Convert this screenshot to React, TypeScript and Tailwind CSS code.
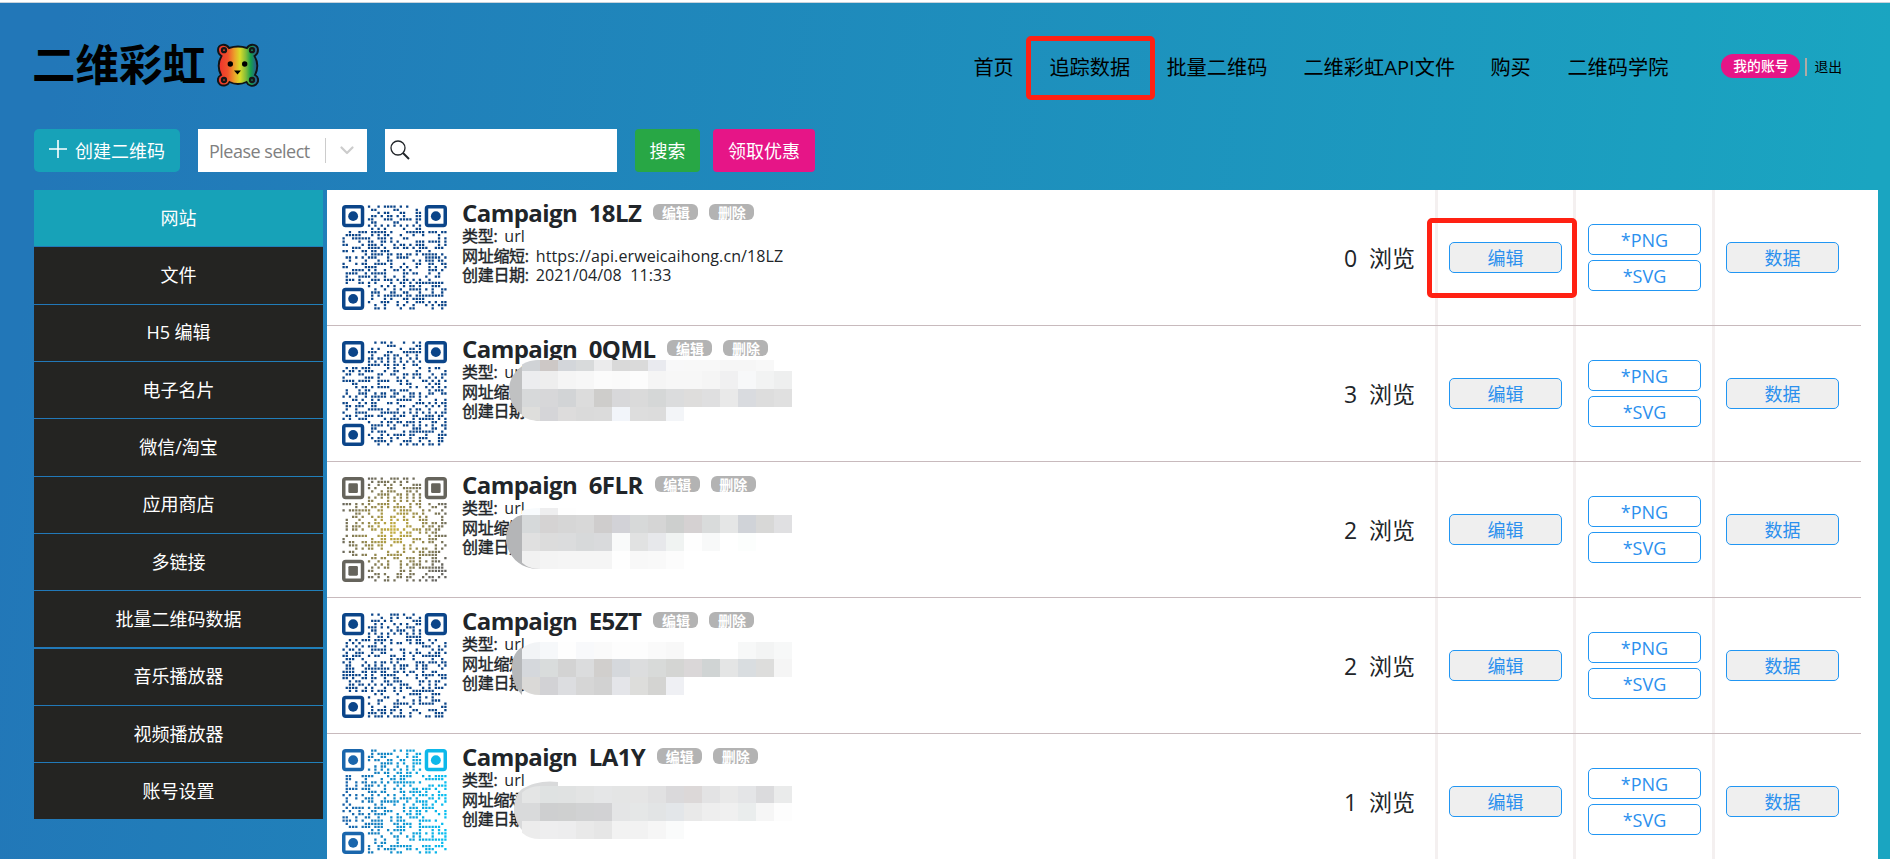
import React from 'react';

type QrStyle = 'navy' | 'gold' | 'sky';

interface Mask {
  blob: string;
  blobFill: string;
  bands: { y: number; h: number; cells: string[] }[];
}

interface Campaign {
  code: string;
  views: number;
  qr: QrStyle;
  seed: number;
  mask?: Mask;
}

const NAV = [
  { label: '首页', w: 'w-[40px] mr-[36px]' },
  { label: '追踪数据', w: 'w-[81px] mr-[36px]', marked: true },
  { label: '批量二维码', w: 'w-[101px] mr-[36px]' },
  { label: '二维彩虹API文件', w: 'w-[151px] mr-[36px]' },
  { label: '购买', w: 'w-[41px] mr-[36px]' },
  { label: '二维码学院', w: 'w-[101px] mr-[53px]' },
];

const SIDEBAR = ['网站', '文件', 'H5 编辑', '电子名片', '微信/淘宝', '应用商店', '多链接', '批量二维码数据', '音乐播放器', '视频播放器', '账号设置'];

const CAMPAIGNS: Campaign[] = [
  { code: '18LZ', views: 0, qr: 'navy', seed: 11 },
  {
    code: '0QML', views: 3, qr: 'navy', seed: 29,
    mask: {
      blob: 'M40 34 C22 36 9 48 9 64 C9 82 24 94 40 95 Z', blobFill: '#c0c1c2',
      bands: [
        { y: 34, h: 11, cells: ['#d0d3d6', '#cdc8c6', '#d3d6da', '#d8dadb', '#ebebec', '#d9d9d9', '#dadada', '#e9eaef', '#f8f8f9', '#f8f8f8', '#f8f8f8', '#f6f6f6', '#f6f6f6', '#f8f8f8'] },
        { y: 45, h: 18, cells: ['#ecedef', '#eeeeee', '#f5f5f5', '#f7f7f7', '#fbfbfb', '#fafafa', '#fcfcfc', '#f5f5f5', '#f7f7f7', '#f7f7f7', '#f5f5f5', '#f0f0f1', '#f7f8f9', '#f2f3f3', '#eeefef'] },
        { y: 63, h: 18, cells: ['#d7d9da', '#d7d7d9', '#d2d4d6', '#dcdcdc', '#cecdcb', '#d8d8da', '#dadada', '#d5d7d7', '#dbdcdd', '#dedddc', '#dfdfe0', '#e9e9e9', '#d9dbdf', '#dddddd', '#e0e0e0'] },
        { y: 81, h: 14, cells: ['#dededc', '#d5d5d8', '#dddcdc', '#dadada', '#dbdbdb', '#f2f5fa', '#dddddd', '#dcdcdc', '#f3f5f8'] },
      ],
    },
  },
  {
    code: '6FLR', views: 2, qr: 'gold', seed: 47,
    mask: {
      blob: 'M22 53 C11 55 6 66 6 78 C7 93 19 106 36 107 L40 107 L40 90 L22 89 Z', blobFill: '#b4b5b7',
      bands: [
        { y: 46, h: 7, cells: ['#f8fbfd', '#eeeeef', '#fefefe'] },
        { y: 53, h: 18, cells: ['#d6d9da', '#d5d3d3', '#d6d6d6', '#d8d8d8', '#cfcdcd', '#d2d2d7', '#d7d9d9', '#d5d5d5', '#cdcfce', '#d5d1d2', '#d9dbdb', '#e5e6e6', '#d0d3d8', '#d8d8d7', '#e0e0e2'] },
        { y: 71, h: 18, cells: ['#e0e0e0', '#dcdcdc', '#dbdcdd', '#d7d9da', '#d9dadc', '#f9fafa', '#e1e2e2', '#e7e8eb', '#f0f3f2', '#fefefe', '#f8f9f9', '#ffffff', '#fcfefd'] },
        { y: 89, h: 18, cells: ['#f1f1f1', '#f4f4f4', '#f5f5f5', '#f5f5f5', '#f5f5f5', '#fefefe', '#f8f8f8', '#f9f9f9', '#fcfcfc'] },
      ],
    },
  },
  {
    code: 'E5ZT', views: 2, qr: 'navy', seed: 83,
    mask: {
      blob: 'M22 49 C14 54 11 63 12 74 C13 85 17 92 22 97 Z', blobFill: '#b6b8ba',
      bands: [
        { y: 44, h: 17, cells: ['#f2f4f6', '#f6f8fa', '#fefefe', '#f8f9fb', '#fafafa', '#fdfdfd', '#fdfdfd', '#fafafa', '#f8f8f8', '#ffffff', '#ffffff', '#ffffff', '#f7f8f8', '#f3f4f4', '#f7f8f8'] },
        { y: 61, h: 18, cells: ['#d5d8dc', '#d9dcdc', '#d3d3d3', '#dbdcdd', '#d1cfcd', '#d5d8dc', '#dcddde', '#d8dad9', '#d4d5d3', '#dad7d8', '#d0d4d4', '#e4e5e5', '#d9dde0', '#dddddc', '#f5f5f5'] },
        { y: 79, h: 18, cells: ['#dad9d7', '#d2d2d5', '#dcdde0', '#d6d6d6', '#d2d2d2', '#e4e5e9', '#dddddb', '#d4d4d2', '#eff0f4'] },
      ],
    },
  },
  {
    code: 'LA1Y', views: 1, qr: 'sky', seed: 101,
    mask: {
      blob: 'M22 55 C16 60 14 68 14 77 C15 84 18 92 22 96 L40 60 L58 52 V48 C45 46 32 49 22 55 Z', blobFill: '#d9dadb',
      bands: [
        { y: 52, h: 17, cells: ['#e4e5e5', '#dfe2e2', '#e0e2e2', '#e3e4e4', '#e5e6e7', '#e4e5e5', '#e5e5e5', '#e1e1e2', '#dad9db', '#dcd8d8', '#e3e3e4', '#e9e9e9', '#e4e5e7', '#dbdbdd', '#eaebeb'] },
        { y: 69, h: 18, cells: ['#d9dadb', '#cecfd0', '#cfd0d0', '#d1d2d3', '#d2d2d4', '#e4e5e6', '#e5e7e7', '#e2e4e5', '#e3e6e9', '#e9e9e9', '#eeeeee', '#f0f0f0', '#eaeded', '#f6f6f6', '#fdfdfd'] },
        { y: 87, h: 18, cells: ['#ececec', '#eeeeef', '#ededee', '#e9e9e9', '#e6e6e6', '#f2f2f2', '#f2f2f2', '#f6f6f6', '#fafbfb'] },
      ],
    },
  },
];

const N = 33;

function modules(seed: number): string {
  let s = seed * 7919;
  const next = () => {
    s = (s * 1103515245 + 12345) % 2147483648;
    return s / 2147483648;
  };
  let d = '';
  for (let y = 0; y < N; y++) {
    for (let x = 0; x < N; x++) {
      let on = next() < 0.46;
      if ((x < 8 && y < 8) || (x >= N - 8 && y < 8) || (x < 8 && y >= N - 8)) continue;
      const r = Math.max(Math.abs(x - 26), Math.abs(y - 26));
      if (r <= 2) on = r !== 1;
      if (y === 6 || x === 6) on = (x + y) % 2 === 0;
      if (on) d += `M${x + 0.14} ${y + 0.14}h.72v.72h-.72z`;
    }
  }
  return d;
}

function QrCode({ style, seed }: { style: QrStyle; seed: number }) {
  const id = `qr-${seed}`;
  const fill = style === 'navy' ? '#0b4589' : `url(#${id})`;
  const eyes = [[0, 0], [N - 7, 0], [0, N - 7]];
  const eyeFill = (i: number) =>
    style === 'navy' ? '#0b4589' : style === 'gold' ? '#66645c' : i === 1 ? '#0db8ea' : '#1a66ac';
  return (
    <svg viewBox="0 0 33 33" className="mt-[15px] ml-[15px] h-[105px] w-[105px] shrink-0">
      {style === 'gold' && (
        <radialGradient id={id} gradientUnits="userSpaceOnUse" cx="16.5" cy="16.5" r="19">
          <stop offset="0" stopColor="#c7b03c" />
          <stop offset="1" stopColor="#65645f" />
        </radialGradient>
      )}
      {style === 'sky' && (
        <linearGradient id={id} gradientUnits="userSpaceOnUse" x1="0" y1="0" x2="33" y2="0">
          <stop offset="0" stopColor="#1a5fa6" />
          <stop offset="1" stopColor="#08c0f2" />
        </linearGradient>
      )}
      <path d={modules(seed)} fill={fill} />
      {eyes.map(([x, y], i) => (
        <g key={i} transform={`translate(${x} ${y})`}>
          <rect x=".55" y=".55" width="5.9" height="5.9" rx=".6" fill="none" stroke={eyeFill(i)} strokeWidth="1.100" />
          {style === 'gold' ? (
            <rect x="2" y="2" width="3" height="3" rx=".4" fill={eyeFill(i)} />
          ) : (
            <circle cx="3.5" cy="3.5" r="1.55" fill={eyeFill(i)} />
          )}
        </g>
      ))}
    </svg>
  );
}

function MaskOverlay({ mask }: { mask: Mask }) {
  return (
    <svg viewBox="0 0 292 136" className="absolute top-0 left-[173px] h-[136px] w-[292px]" shapeRendering="crispEdges">
      <path d={mask.blob} fill={mask.blobFill} shapeRendering="auto" />
      {mask.bands.map((b, j) =>
        b.cells.map((c, i) => {
          const edge = i === 0 && (j === 0 || j === mask.bands.length - 1);
          return edge ? (
            <path
              key={`${j}-${i}`}
              shapeRendering="auto"
              fill={c}
              d={
                j === 0
                  ? `M22 ${b.y + b.h}v${-b.h * 0.6}q7 ${-b.h * 0.4} 18 ${-b.h * 0.4}v${b.h}z`
                  : `M22 ${b.y}v${b.h * 0.65}q7 ${b.h * 0.35} 18 ${b.h * 0.35}v${-b.h}z`
              }
            />
          ) : (
            <rect key={`${j}-${i}`} x={22 + i * 18} y={b.y} width="18" height={b.h} fill={c} />
          );
        }),
      )}
    </svg>
  );
}

function Bear() {
  return (
    <svg viewBox="0 0 42 44" className="ml-[11px] h-[44px] w-[42px]">
      <linearGradient id="rainbow" gradientUnits="userSpaceOnUse" x1="1" y1="0" x2="41" y2="0">
        <stop offset="0" stopColor="#ee2e2c" />
        <stop offset=".25" stopColor="#f0542b" />
        <stop offset=".42" stopColor="#eba52a" />
        <stop offset=".55" stopColor="#d9dc28" />
        <stop offset=".7" stopColor="#7fbb3c" />
        <stop offset=".82" stopColor="#15a04c" />
        <stop offset=".95" stopColor="#26608f" />
      </linearGradient>
      <path
        d="M12 5C9 0 1 1 1 7c0 4 2 5 3.500 6C1 19 1 26 4 32c-4 2-4 7-1 9.500 3 2 8 1 9.500-2.500 5 2.300 12 2.300 17 0C31 43 36 44 39 41.500c3-2.500 3-7.500-1-9.500 3-6 3-13-.5-19C39 12 41 11 41 7c0-6-8-7-11-2C24 3 18 3 12 5Z"
        fill="url(#rainbow)" stroke="#101417" strokeWidth="1.900"
      />
      <g fill="none" stroke="#161616" strokeWidth="2.300">
        <circle cx="7" cy="7.200" r="2" /><circle cx="35" cy="7.200" r="2" />
        <circle cx="7" cy="37" r="2" /><circle cx="35" cy="37" r="2" />
      </g>
      <circle cx="13.300" cy="21" r="2.700" /><circle cx="27.700" cy="21" r="2.700" />
      <path d="M17 27.500h7L20.500 31.500z" />
    </svg>
  );
}

function Tag({ children }: { children: React.ReactNode }) {
  return (
    <span className="flex h-4 w-[45px] items-center justify-center rounded-[6px] bg-[#b3b3b3] pt-[1px] text-[14px] leading-none font-bold text-white">
      {children}
    </span>
  );
}

function Label({ children }: { children: React.ReactNode }) {
  return <span className="mr-[7px] tracking-[-0.3px] [-webkit-text-stroke:0.4px_#212529]">{children}</span>;
}

function Row({ c, marked }: { c: Campaign; marked: boolean }) {
  const action = 'flex h-[31px] w-[113px] items-center justify-center rounded-[5px] border border-[#2196f3] text-[18px] leading-none text-[#2b90ee]';
  return (
    <div className="relative flex h-[136px] w-[1534px] shrink-0 border-b border-[#c8babd]">
      <QrCode style={c.qr} seed={c.seed} />
      <div className="ml-[15px] grow pt-[9px] text-[16px] leading-[19.5px] text-[#212529]">
        <div className="flex h-[28px] items-center">
          <span className="text-[24px] leading-[28px] font-bold whitespace-pre tracking-[-0.55px]">Campaign  {c.code}</span>
          <span className="ml-[12px] flex gap-[11px] pb-[2px]">
            <Tag>编辑</Tag>
            <Tag>删除</Tag>
          </span>
        </div>
        <div className="flex"><Label>类型:</Label>url</div>
        <div className="flex"><Label>网址缩短:</Label>{!c.mask && <span className="tracking-[0.1px]">https://api.erweicaihong.cn/{c.code}</span>}</div>
        <div className="flex whitespace-pre"><Label>创建日期:</Label>{!c.mask && <span className="tracking-[0.1px]">2021/04/08  11:33</span>}</div>
      </div>
      {c.mask && <MaskOverlay mask={c.mask} />}
      <div className="flex w-[120px] items-center justify-end pt-[2px] pr-[20px] text-[23px] whitespace-pre text-[#212529]">
        {c.views}  浏览
      </div>
      <div className="relative flex w-[138px] items-center border-l-[3px] border-[#f4f0f0] pl-[11px]">
        <button className={`${action} bg-[#efefef]`}>编辑</button>
        {marked && <span className="absolute top-[28px] left-[-11px] h-[80px] w-[150px] rounded-[5px] border-[5px] border-[#ff2113]" />}
      </div>
      <div className="flex w-[139px] flex-col justify-center gap-[5px] border-l-[3px] border-[#f4f0f0] pl-[12px]">
        <button className={action}>*PNG</button>
        <button className={action}>*SVG</button>
      </div>
      <div className="flex w-[149px] items-center border-l-[3px] border-[#f4f0f0] pl-[11px]">
        <button className={`${action} bg-[#efefef]`}>数据</button>
      </div>
    </div>
  );
}

export default function App() {
  return (
    <div className="flex h-[859px] w-[1890px] flex-col overflow-hidden border-t-2 border-white bg-white font-['Open_Sans','Noto_Sans_CJK_SC',sans-serif]">
      <div className="flex min-h-0 grow flex-col border-t border-[#c9d3dc] bg-[linear-gradient(97deg,#2277b8_3%,#1aa5c1_95%)]">
        <header className="flex h-[126px] shrink-0 pr-[48px] pl-[32px] text-black">
          <div className="flex h-[124px] items-start pt-[40px]">
            <span className="text-[43.5px] leading-[43px] font-bold">二维彩虹</span>
            <Bear />
          </div>
          <nav className="ml-auto flex h-[128px] items-center text-[20.2px]">
            {NAV.map((n) => (
              <a key={n.label} className={`${n.w} relative shrink-0 whitespace-nowrap`}>
                {n.label}
                {n.marked && <span className="absolute top-[-16px] left-[-23px] h-[64px] w-[129px] rounded-[5px] border-[5px] border-[#ff2113]" />}
              </a>
            ))}
            <a className="mb-[2px] flex h-6 w-[79px] items-center justify-center rounded-full bg-[#e61587] text-[13.800px] leading-none font-medium text-white">我的账号</a>
            <span className="mr-[7px] ml-[5px] h-[18px] w-[2px] bg-[#b0aaa6]" />
            <a className="text-[13.800px]">退出</a>
          </nav>
        </header>

        <div className="flex h-[43px] shrink-0 pl-[34px] text-[18px] leading-none text-white">
          <button className="mr-[18px] flex w-[146px] items-center rounded-[5px] bg-[#17a2b8] pl-[14px]">
            <svg viewBox="0 0 20 20" className="mr-[7px] mb-[3px] h-5 w-5 shrink-0" stroke="#fff" strokeWidth="1.600"><path d="M10 1v18M1 10h18" /></svg>
            创建二维码
          </button>
          <div className="mr-[18px] flex w-[169px] items-center bg-white pl-[11px] text-[#808080]">
            <span className="w-[116px] tracking-[-0.5px] whitespace-nowrap">Please select</span>
            <span className="h-[25px] w-px bg-[#ccc]" />
            <svg viewBox="0 0 14 9" className="ml-[14px] h-[9px] w-[14px]" fill="none" stroke="#ccc" strokeWidth="2.200" strokeLinecap="round" strokeLinejoin="round"><path d="M1.500 1.500 7 7l5.500-5.500" /></svg>
          </div>
          <div className="mr-[18px] flex w-[232px] items-center bg-white pl-[5px]">
            <svg viewBox="0 0 20 20" className="mb-[1px] h-5 w-5" fill="none" stroke="#212529" strokeWidth="1.300"><circle cx="8" cy="8" r="7" /><path d="m13 13 6 6" strokeWidth="1.900" /></svg>
          </div>
          <button className="mr-[13px] w-[65px] rounded-[4px] bg-[#28a745]">搜索</button>
          <button className="w-[102px] rounded-[4px] bg-[#e61587]">领取优惠</button>
        </div>

        <main className="mt-[18px] flex min-h-0 grow pl-[34px]">
          <aside className="mr-[4px] flex w-[289px] flex-col gap-[1.150px]">
            {SIDEBAR.map((s, i) => (
              <a key={s} className={`flex h-[56.200px] shrink-0 items-center justify-center text-[18px] text-white ${i === 0 ? 'bg-[#17a2b8]' : 'bg-[#242422]'}`}>
                {s}
              </a>
            ))}
          </aside>
          <section className="flex w-[1551px] flex-col overflow-hidden bg-white">
            {CAMPAIGNS.map((c, i) => (
              <Row key={c.code} c={c} marked={i === 0} />
            ))}
          </section>
        </main>
      </div>
    </div>
  );
}
